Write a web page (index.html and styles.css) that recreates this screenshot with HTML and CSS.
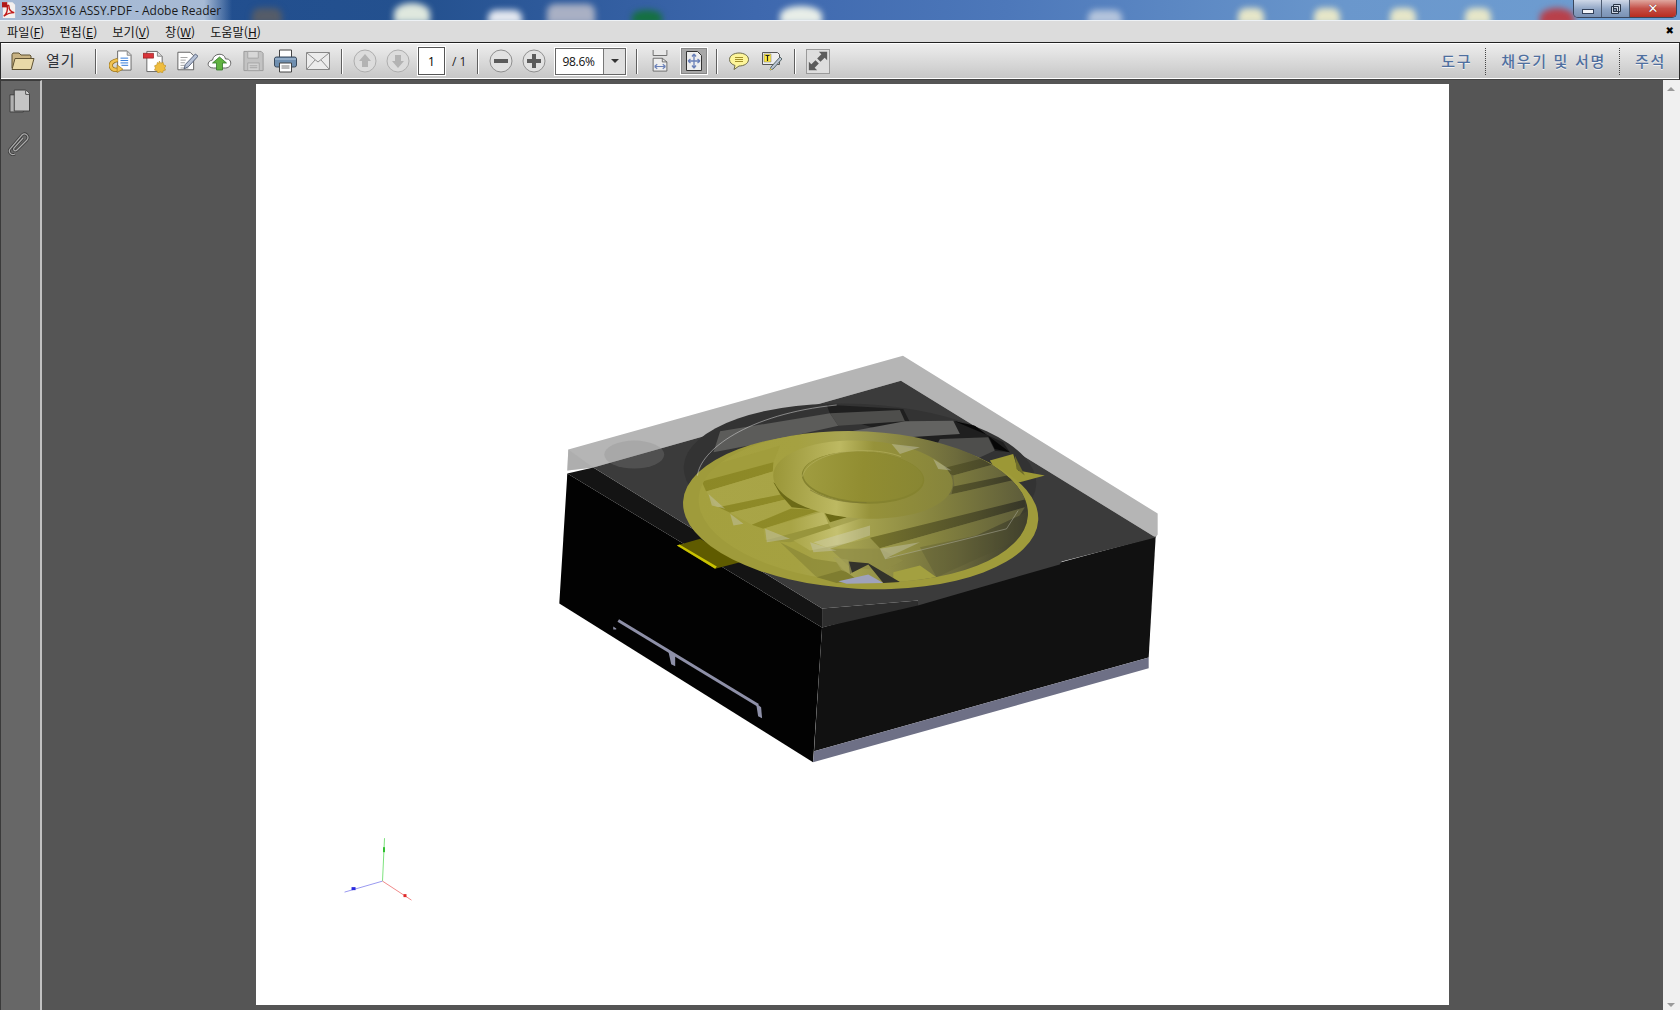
FILE: index.html
```html
<!DOCTYPE html>
<html lang="ko">
<head>
<meta charset="utf-8">
<title>35X35X16 ASSY.PDF - Adobe Reader</title>
<link rel="stylesheet" href="styles.css">
</head>
<body>
<div class="window">
  <header class="titlebar">
    <div class="desk">
      <i class="blob b1"></i><i class="blob b2"></i><i class="blob b3"></i><i class="blob b4"></i><i class="blob b5"></i><i class="blob b6"></i><i class="blob b7"></i><i class="blob b8"></i><i class="blob b9"></i><i class="blob b10"></i><i class="blob b11"></i><i class="blob b12"></i>
    </div>
    <div class="title-left">
      <svg class="app-icon" viewBox="0 0 16 18"><path d="M1 0h11l3 3v15H1z" fill="#f4f0ee"/><path d="M2 16c3-2 5-7 4-11 0-2 2-2 2 0 0 4 2 6 6 7-4 0-8 1-12 4z" fill="none" stroke="#c01818" stroke-width="1.6"/><path d="M0 0h6v6H0z" fill="#b01818"/></svg>
      <span class="title-text">35X35X16 ASSY.PDF - Adobe Reader</span>
    </div>
    <div class="winbtns">
      <div class="wb wb-min"><i></i></div>
      <div class="wb wb-max"><svg viewBox="0 0 12 12"><path d="M3.500 1.500h7v7h-7zM1.500 3.500h7v7h-7z" fill="#cfd8e6" stroke="#2a3648"/><path d="M3.500 5.500h3v3h-3z" fill="#7f93ad" stroke="#2a3648"/></svg></div>
      <div class="wb wb-close"><span>✕</span></div>
    </div>
  </header>
  <nav class="menubar">
    <span class="mi m1">파일(<u>F</u>)</span>
    <span class="mi m2">편집(<u>E</u>)</span>
    <span class="mi m3">보기(<u>V</u>)</span>
    <span class="mi m4">창(<u>W</u>)</span>
    <span class="mi m5">도움말(<u>H</u>)</span>
    <span class="menu-close">✖</span>
  </nav>
  <div class="toolbar">
    <svg class="folder" viewBox="0 0 24 20"><path d="M1 17V3.500L2 2h6l2 2h9l1 1v3" fill="#c9b383" stroke="#5f5232"/><path d="M1 18.500l3-11h19l-3 11z" fill="#e9d9a8" stroke="#5f5232"/></svg>
    <span class="open-label">열기</span>
    <i class="sep s-a"></i>
    <div class="group g-docs">
      <svg class="ic" viewBox="0 0 24 24"><path d="M9 1.500h10l4 4v16H9z" fill="#fff" stroke="#666"/><path d="M19 2v4h4" fill="#ddd" stroke="#888"/><path d="M12 9h8M12 11.500h8M12 14h8M13 16.500h7" stroke="#2f78d8"/><path d="M9 11c-5 1-8 3-7 7 1 2.500 4 3.500 7 3" fill="none" stroke="#9c7418" stroke-width="4.400"/><path d="M9 11c-5 1-8 3-7 7 1 2.500 4 3.500 7 3" fill="none" stroke="#f2c350" stroke-width="2.800"/><path d="M8.500 16l6 4.500-6 3.500z" fill="#f2c350" stroke="#9c7418" stroke-width=".7"/></svg>
      <svg class="ic" viewBox="0 0 24 24"><path d="M4 2h11l5 5v16H4z" fill="#fff" stroke="#666"/><path d="M15 2v5h5" fill="#ddd" stroke="#888"/><path d="M0 4h11v5H0z" fill="#d8343a" stroke="#8c1c1c" stroke-width=".7"/><path d="M17 12l1.500 2.300 2.500-.8.500 2.500 2.500 1-1.500 2.200 1 2.300-2.500.7-.5 2-2.500-.8-2.500 1-1-2.200-2.500-.7 1-2.300-1-2.200 2.500-1 .5-2.500 2 .8z" fill="#efbd3e" stroke="#b88a1c" stroke-width=".6"/></svg>
      <svg class="ic ic-n" viewBox="0 0 24 24"><path d="M1 2h14l4 4v16H1z" fill="#fff" stroke="#555"/><path d="M4 8h8M4 11h6M4 14h5M4 17h5M4 20h9" stroke="#999"/><path d="M21 4l3 2.500-11 12-5 2.500 1.500-5z" fill="#b7c2d6" stroke="#4c5872"/></svg>
      <svg class="ic ic-w" viewBox="0 0 24 24"><path d="M6 19c-7 0-7-7-1-8 1-7 12-8 13-1 7-1 7 9 0 9z" fill="#fff" stroke="#666"/><path d="M12 8l-7 6h4v7h6v-7h4z" fill="#62b342" stroke="#33782a" stroke-width=".8"/></svg>
      <svg class="ic ic-s" viewBox="0 0 24 24"><path d="M2 2h18l2 2v18H2z" fill="#c3c3c3" stroke="#9a9a9a"/><path d="M6 2h11v7H6z" fill="#d8d8d8" stroke="#a5a5a5"/><path d="M6 14h12v8H6z" fill="#d2d2d2" stroke="#a5a5a5"/><path d="M8 17h8M8 19h8" stroke="#a5a5a5"/></svg>
      <svg class="ic ic-p" viewBox="0 0 24 24"><path d="M6 1h12v8H6z" fill="#fff" stroke="#444"/><rect x="1" y="8" width="22" height="10" rx="2" fill="#6f8fb0" stroke="#3a4a5c"/><path d="M1.500 10h21" stroke="#b8cbe0"/><path d="M6 14h12v9H6z" fill="#fff" stroke="#444"/><path d="M8 17h8M8 19h8" stroke="#777"/></svg>
      <svg class="ic ic-m" viewBox="0 0 24 18"><path d="M.5.500h23v17H.5z" fill="#ececec" stroke="#888"/><path d="M1 1l11 9L23 1M1 17l8-9M23 17l-8-9" fill="none" stroke="#8f8f8f"/></svg>
    </div>
    <i class="sep s-b"></i>
    <svg class="circ c-up" viewBox="0 0 24 24"><circle cx="12" cy="12" r="11" fill="#dcdcdc" stroke="#aeaeae"/><path d="M12 5l6 7h-3v6H9v-6H6z" fill="#b3b3b3"/></svg>
    <svg class="circ c-down" viewBox="0 0 24 24"><circle cx="12" cy="12" r="11" fill="#dcdcdc" stroke="#aeaeae"/><path d="M12 19l6-7h-3V6H9v6H6z" fill="#b3b3b3"/></svg>
    <div class="pagebox">1</div>
    <span class="pagetotal">/ 1</span>
    <i class="sep s-c"></i>
    <svg class="circ c-minus" viewBox="0 0 24 24"><circle cx="12" cy="12" r="11" fill="#e2e2e2" stroke="#8f8f8f"/><path d="M5 10h14v4H5z" fill="#5c5c5c"/></svg>
    <svg class="circ c-plus" viewBox="0 0 24 24"><circle cx="12" cy="12" r="11" fill="#e2e2e2" stroke="#8f8f8f"/><path d="M10 5h4v5h5v4h-5v5h-4v-5H5v-4h5z" fill="#5c5c5c"/></svg>
    <div class="zoombox"><span class="zoomval">98.6%</span><span class="zoomarrow"><i></i></span></div>
    <i class="sep s-d"></i>
    <svg class="fit-w" viewBox="0 0 16 24"><path d="M.5 0v6h15V0" fill="#e8e8e8" stroke="#666"/><path d="M.5 9h10l5 4v10H.5z" fill="#eee" stroke="#666"/><path d="M10.500 9v4h5" fill="none" stroke="#666"/><path d="M2 18h12M2 18l3-2.500M2 18l3 2.500M14 18l-3-2.500M14 18l-3 2.500" fill="none" stroke="#6a80b8" stroke-width="1.300"/></svg>
    <div class="fit-p"><svg viewBox="0 0 16 20"><path d="M.5.500h11l4 4v15H.5z" fill="#eee" stroke="#333"/><path d="M8 3v14M2 10h12M8 3L6 5.500M8 3l2 2.500M8 17l-2-2.500M8 17l2-2.500M2 10l2.500-2M2 10l2.500 2M14 10l-2.500-2M14 10l-2.500 2" fill="none" stroke="#6a80b8" stroke-width="1.300"/></svg></div>
    <i class="sep s-e"></i>
    <svg class="cmt" viewBox="0 0 20 18"><path d="M10 1c5 0 9.500 2.500 9.500 6.500S15 14 10 14l-5 3.500 1-4C3 12.500.5 10.500.5 7.500.5 3.500 5 1 10 1z" fill="#fdf59a" stroke="#6d6b4a"/><path d="M6 5.500h8M6 7.500h8M6 9.500h8" stroke="#a28f2a"/></svg>
    <svg class="hl" viewBox="0 0 20 20"><path d="M.5 1.500h15l2 2v10H.5z" fill="#eee" stroke="#555"/><path d="M2 3h7v8H2z" fill="#ffe93c" stroke="#777" stroke-width=".5"/><path d="M3.500 4.500h4M5.500 4.500V10" stroke="#222" stroke-width="1.200"/><path d="M18 6l2 2-9 10-3 1 1-3z" fill="#b9c3d3" stroke="#566"/><path d="M8 19l2 0-2-2z" fill="#e7c93c"/></svg>
    <i class="sep s-f"></i>
    <div class="fs"><svg viewBox="0 0 24 24"><path d="M13 1h10v10l-3-3-5 5-4-4 5-5zM11 23H1V13l3 3 5-5 4 4-5 5z" fill="#5c5c5c"/></svg></div>
    <div class="tabs">
      <span class="tab t-tool">도구</span>
      <i class="dots"></i>
      <span class="tab t-sign">채우기 및 서명</span>
      <i class="dots"></i>
      <span class="tab t-note">주석</span>
    </div>
  </div>
  <main class="body">
    <aside class="rail">
      <svg class="rail-pages" viewBox="0 0 22 24"><path d="M1 5.500h14v18H1z" fill="#b0b0b0" stroke="#3e3e3e"/><path d="M5.500.500h12l4 4v18h-16z" fill="#c4c4c4" stroke="#3e3e3e"/><path d="M17.500 1v4h4" fill="#eee" stroke="#3e3e3e"/></svg>
      <svg class="rail-clip" viewBox="0 0 22 24"><path d="M7 22c-4 2-7-2-5-5L14 3c3-3 8 1 5 5L9 18c-2 2-4 0-3-2l9-10" fill="none" stroke="#3c3c3c" stroke-width="2.800"/><path d="M7 22c-4 2-7-2-5-5L14 3c3-3 8 1 5 5L9 18c-2 2-4 0-3-2l9-10" fill="none" stroke="#ababab" stroke-width="1.200"/></svg>
    </aside>
    <section class="canvas">
      <div class="page">
        <svg class="drawing" viewBox="256 83 1193 922">
          <defs>
            <linearGradient id="dish" x1="85" x2="1075" y1="0" y2="0" gradientUnits="userSpaceOnUse">
              <stop offset="0" stop-color="#a4a03e"/><stop offset=".3" stop-color="#a5a141"/><stop offset=".44" stop-color="#a8a552"/><stop offset=".58" stop-color="#8f8c45"/><stop offset=".78" stop-color="#6d6b3c"/><stop offset="1" stop-color="#3a3a2c"/>
            </linearGradient>
            <linearGradient id="bandz" x1="85" x2="1075" y1="0" y2="0" gradientUnits="userSpaceOnUse">
              <stop offset="0" stop-color="#a9a547"/><stop offset=".28" stop-color="#a8a446"/><stop offset=".42" stop-color="#c5c170"/><stop offset=".5" stop-color="#a5a24e"/><stop offset=".72" stop-color="#85833f"/><stop offset="1" stop-color="#5c5b3a"/>
            </linearGradient>
            <linearGradient id="stepz" x1="85" x2="1075" y1="0" y2="0" gradientUnits="userSpaceOnUse">
              <stop offset="0" stop-color="#8c8826"/><stop offset=".35" stop-color="#8f8b28"/><stop offset=".6" stop-color="#6c6a2c"/><stop offset=".85" stop-color="#4d4c2a"/><stop offset="1" stop-color="#343428"/>
            </linearGradient>
            <linearGradient id="discz" x1="309" x2="849" y1="0" y2="0" gradientUnits="userSpaceOnUse">
              <stop offset="0" stop-color="#9a9638"/><stop offset=".36" stop-color="#bdb962"/><stop offset=".55" stop-color="#96923a"/><stop offset="1" stop-color="#86843c"/>
            </linearGradient>
            <linearGradient id="topz" x1="395" x2="765" y1="0" y2="0" gradientUnits="userSpaceOnUse">
              <stop offset="0" stop-color="#a09d40"/><stop offset=".5" stop-color="#918d31"/><stop offset="1" stop-color="#888633"/>
            </linearGradient>
            <clipPath id="dishclip"><ellipse cx="580" cy="318" rx="495" ry="226" transform="rotate(3 580 318)"/></clipPath>
          </defs>
          <!-- plate -->
          <polygon points="568,449 903,355 1158,513 1158,534 1156,537 901,380 593,467 567,470" fill="#b5b5b5"/>
          <polygon points="568,449 593,467 567,470" fill="#aaaaaa" opacity=".6"/>
          <!-- sides -->
          <polygon points="567,473 559,603 813,762 822,627" fill="#020202"/>
          <polygon points="822,627 814,751 1149,657 1156,536" fill="#111111"/>
          <polygon points="814,751 1149,657 1149,668 813,762" fill="#6e7086"/>
          <polyline points="618,620 758,705" fill="none" stroke="#8e90a8" stroke-width="3"/>
          <polygon points="668,650 675,654 675,666 671,664" fill="#8e90a8"/>
          <polygon points="756,703 761,707 762,718 758,716" fill="#8e90a8"/>
          <polygon points="613,626 616,628 616,629 613,629" fill="#8e90a8"/>
          <!-- top -->
          <polygon points="567,473 593,467 822,608 822,627" fill="#141414"/>
          <polygon points="593,467 901,380 1156,537 1062,561 1060,564 918,605 918,600 822,608" fill="#3b3b3b"/>
          <polygon points="822,608 918,600 918,605 822,627" fill="#2e2e2e"/>
          <ellipse cx="634" cy="454" rx="30" ry="14" fill="#8a8a8a" opacity=".28"/>
          <!-- model close-up in zoomed coordinates -->
          <g transform="translate(670 400) scale(.33333)">
            <ellipse cx="570" cy="225" rx="530" ry="215" fill="#333333" transform="rotate(3 570 225)"/>
            <polygon points="470,12 700,25 720,65 860,62 1000,125 1020,155 965,150 700,110 480,40" fill="#1f1f1f"/>
            <polygon points="130,155 150,92 480,38 505,75 260,130" fill="#5c5c5a"/>
            <polygon points="505,75 480,38 690,28 705,62" fill="#4e4e4c"/>
            <polygon points="705,62 850,60 870,100 680,112 500,100" fill="#636361"/>
            <polygon points="810,115 955,110 975,150 920,175 800,135" fill="#4e4e4c"/>
            <polygon points="855,62 915,75 1020,155 975,145 955,105" fill="#070707"/>

            <!-- tabs under the rim -->
            <polygon points="20,435 90,415 210,485 135,505" fill="#5f5b00"/>
            <polygon points="20,435 28,432 140,498 135,505" fill="#c9c200"/>
            <polygon points="960,180 1030,160 1045,210 1125,225 1050,245 1000,240" fill="#9c9836"/>

            <!-- rim -->
            <ellipse cx="572" cy="331" rx="534" ry="234" fill="#9f9b3b" transform="rotate(3 572 331)"/>

            <!-- dish and steps -->
            <g clip-path="url(#dishclip)">
              <rect x="60" y="60" width="1040" height="520" fill="url(#dish)"/>
              <polygon points="90,205 330,135 310,185 95,243" fill="#a19d3c"/>
              <polygon points="95,243 310,185 308,213 108,273" fill="url(#stepz)"/>
              <polygon points="108,273 308,213 340,280 140,320" fill="url(#bandz)"/>
              <polygon points="145,320 340,280 346,297 180,337" fill="url(#stepz)"/>
              <polygon points="180,337 346,297 362,323 245,373" fill="url(#bandz)"/>
              <polygon points="245,373 362,325 458,328 280,385" fill="url(#stepz)"/>
              <polygon points="280,385 460,333 475,370 285,420" fill="url(#bandz)"/>
              <polygon points="285,420 475,370 490,395 360,425" fill="#98953c"/>
              <polygon points="810,205 930,175 975,190 850,225" fill="url(#stepz)"/>
              <polygon points="850,225 975,190 1040,170 1065,225 855,270" fill="url(#bandz)"/>
              <polygon points="850,258 1058,215 1068,235 845,280" fill="url(#stepz)"/>
              <polygon points="370,420 570,355 830,285 1068,230 1065,300 570,420 420,450" fill="url(#bandz)"/>
              <polygon points="600,412 1065,297 1065,320 630,443" fill="url(#stepz)"/>
              <polygon points="630,443 1065,320 1050,345 920,405 645,475" fill="url(#bandz)"/>
              <polygon points="330,425 430,475 500,485 530,520 440,530" fill="#8a8836" opacity=".7"/>
              <polygon points="480,445 630,445 700,480 640,510 540,500" fill="#8f8c46" opacity=".7"/>
              <polygon points="800,530 1075,405 1075,330 1050,345 920,405 750,440" fill="#4f4e2e" opacity=".3"/>
              <polygon points="670,515 750,495 800,530 670,550" fill="#a3a040"/>
            </g>
            <polygon points="1035,165 1065,225 1040,205" fill="#6e6c2a"/>

            <!-- centre vent -->
            <polygon points="440,530 520,508 565,540 500,548" fill="#7f7d30"/>
            <polygon points="505,542 595,522 640,548 530,550" fill="#9fa2bc"/>
            <polygon points="535,483 595,488 690,545 640,548 595,492 540,520" fill="#33332b"/>
            <polygon points="490,470 535,478 548,522 515,510" fill="#a3a058" opacity=".65"/>

            <!-- raised disc -->
            <polygon points="310,245 330,280 365,320 460,330 480,365 530,350 420,320" fill="#6c6a16"/>
            <ellipse cx="579" cy="237" rx="270" ry="117" fill="url(#discz)" transform="rotate(3 579 237)"/>
            <ellipse cx="579" cy="231" rx="184" ry="78" fill="#85832f" transform="rotate(3 579 231)"/>
            <ellipse cx="579" cy="228" rx="180" ry="75" fill="url(#topz)" transform="rotate(3 579 228)"/>
            <path d="M397 228c12-48 90-78 182-78 42 0 84 6 114 18" fill="none" stroke="#b3af5d" stroke-width="2"/>
            <path d="M420 268c50 30 110 40 170 38" fill="none" stroke="#787632" stroke-width="2"/>

            <!-- glass facets -->
            <g fill="#c6c6b2" opacity=".45">
              <polygon points="115,280 165,325 125,315"/>
              <polygon points="180,340 220,370 190,375"/>
              <polygon points="285,385 360,415 290,425"/>
              <polygon points="420,425 500,450 430,455"/>
              <polygon points="630,445 750,425 645,475"/>
              <polygon points="665,130 750,140 690,160"/>
              <polygon points="790,175 845,210 805,205"/>
            </g>
            <polygon points="430,425 600,375 600,405 480,445" fill="#d8d8c8" opacity=".35"/>
            <path d="M82 225C90 150 230 40 500 13" fill="none" stroke="#dedede" stroke-opacity=".5" stroke-width="3"/>
            <path d="M645 475l225-55 140-35 35-55" fill="none" stroke="#bcbcae" stroke-opacity=".45" stroke-width="3"/>
          </g>
          <!-- axes -->
          <line x1="382" y1="881" x2="384" y2="838" stroke="#7ce27c"/>
          <rect x="382.500" y="847" width="2" height="5" fill="#30c030"/>
          <line x1="382" y1="881" x2="344" y2="892" stroke="#9a9af0"/>
          <rect x="351" y="887" width="4" height="3" fill="#2a2ae0"/>
          <line x1="382" y1="881" x2="411" y2="900" stroke="#f08a8a"/>
          <rect x="403" y="894" width="3" height="3" fill="#e02a2a"/>
        </svg>
      </div>
    </section>
    <aside class="scroll"><i class="sc-up"></i><i class="sc-down"></i></aside>
  </main>
</div>
</body>
</html>
```
FILE: styles.css
```css
* { box-sizing: border-box; }
html, body { margin: 0; padding: 0; }
body { width: 1680px; height: 1010px; overflow: hidden; font-family: "Noto Sans", "Noto Sans CJK KR", sans-serif; }
.window { width: 1680px; height: 1010px; display: flex; flex-direction: column; background: #555; }

.titlebar { height: 21px; flex: none; position: relative; overflow: hidden; background: linear-gradient(90deg, #1f4c8e 0, #24518f 25%, #3e68ae 45%, #4d78ba 60%, #6a97cc 80%, #6f9ed2 100%); border-bottom: 1px solid #eef2f6; display: flex; justify-content: space-between; }
.desk { position: absolute; inset: 0; }
.blob { position: absolute; display: block; filter: blur(3px); border-radius: 8px 8px 0 0; }
.b1 { left: 252px; top: 8px; width: 30px; height: 16px; background: #555c68; }
.b2 { left: 394px; top: 3px; width: 36px; height: 20px; background: #dfe8de; border-radius: 50% 50% 0 0; }
.b3 { left: 488px; top: 10px; width: 34px; height: 14px; background: #e4e8f0; }
.b4 { left: 547px; top: 4px; width: 48px; height: 20px; background: #a9b0c4; }
.b5 { left: 632px; top: 10px; width: 30px; height: 14px; background: #157040; border-radius: 50% 50% 0 0; }
.b6 { left: 780px; top: 6px; width: 42px; height: 18px; background: #e8eee8; border-radius: 50% 50% 0 0; }
.b7 { left: 1088px; top: 10px; width: 34px; height: 14px; background: #b4c4dc; }
.b8 { left: 1238px; top: 8px; width: 26px; height: 16px; background: #e6e6c8; }
.b9 { left: 1314px; top: 8px; width: 26px; height: 16px; background: #e6e6c8; }
.b10 { left: 1390px; top: 8px; width: 26px; height: 16px; background: #e6e6c8; }
.b11 { left: 1465px; top: 8px; width: 26px; height: 16px; background: #e6e6c8; }
.b12 { left: 1540px; top: 8px; width: 34px; height: 18px; background: #b8404a; border-radius: 50% 50% 0 0; }
.title-left { position: relative; display: flex; align-items: center; height: 20px; width: 232px; padding-left: 4px; background: linear-gradient(90deg, rgba(190,205,225,.85) 0, rgba(190,205,225,.85) 88%, rgba(190,205,225,0) 100%); }
.app-icon { width: 14px; height: 16px; flex: none; margin-left: -2px; }
.title-text { margin-left: 5px; font-family: "Open Sans", sans-serif; font-size: 12px; color: #1a1a1a; white-space: nowrap; }
.winbtns { position: relative; display: flex; height: 18px; margin-right: 3px; border: 1px solid #39465c; border-top: 0; border-radius: 0 0 5px 5px; overflow: hidden; }
.wb { display: flex; align-items: center; justify-content: center; height: 100%; }
.wb-min { width: 28px; background: linear-gradient(#cfd8e8, #8ea4c4 55%, #7a92b4); border-right: 1px solid #4c5a70; }
.wb-min i { display: block; width: 12px; height: 5px; margin-top: 5px; background: #f2f4f8; border: 1px solid #33415a; }
.wb-max { width: 28px; background: linear-gradient(#cfd8e8, #8ea4c4 55%, #7a92b4); border-right: 1px solid #4c5a70; }
.wb-max svg { width: 12px; height: 12px; }
.wb-close { width: 46px; background: linear-gradient(#e0a8a0, #c45048 50%, #b82c20); }
.wb-close span { color: #fff; font-size: 13px; font-weight: 700; line-height: 1; font-family: "DejaVu Sans", sans-serif; text-shadow: 0 0 1px #400; }

.menubar { height: 21px; flex: none; background: #dcdcdc; display: flex; align-items: center; font-size: 12.200px; color: #111; position: relative; font-family: "Noto Sans CJK KR", sans-serif; }
.mi { white-space: nowrap; line-height: 20px; }
.m1 { margin-left: 7px; }
.m2, .m3, .m4, .m5 { margin-left: 15px; }
.menu-close { position: absolute; right: 6px; top: 3px; font-size: 10px; line-height: 14px; color: #000; font-family: "DejaVu Sans", sans-serif; }

.toolbar { height: 38px; flex: none; display: flex; align-items: center; border: 1px solid #2c2c2c; border-bottom-color: #444; border-top-color: #222; box-shadow: inset 0 1px 0 #fff, inset 0 -1px 0 #fff; background: linear-gradient(#eeeeee, #c6c6c6); }
.folder { width: 24px; height: 20px; margin-left: 10px; flex: none; }
.open-label { margin-left: 11px; width: 31px; font-size: 15px; line-height: 20px; padding-bottom: 2px; color: #2f3238; font-family: "Noto Sans CJK KR", sans-serif; white-space: nowrap; letter-spacing: 1px; }
.sep { display: block; flex: none; width: 1px; height: 25px; background: #5f5f5f; box-shadow: 1px 0 0 #fff; }
.s-a { margin-left: 18px; }
.group { display: flex; align-items: center; flex: none; margin-left: 13px; }
.ic { width: 23px; height: 24px; margin-right: 11px; flex: none; }
.ic-n { width: 21px; margin-right: 9px; }
.ic-w { width: 25px; margin-right: 10px; }
.ic-s { margin-right: 8px; }
.ic-p { width: 25px; margin-right: 8px; }
.ic-m { width: 24px; height: 18px; margin-right: 0; }
.s-b { margin-left: 11px; }
.circ { width: 24px; height: 24px; flex: none; }
.c-up { margin-left: 11px; }
.c-down { margin-left: 9px; }
.pagebox { width: 27px; height: 28px; margin-left: 8px; flex: none; background: #fff; border: 1px solid #555; outline: 1px solid #fff; font-size: 12px; display: flex; align-items: center; justify-content: center; color: #000; font-family: "Open Sans", sans-serif; }
.pagetotal { margin-left: 7px; width: 17px; font-size: 12px; white-space: nowrap; color: #222; font-family: "Open Sans", sans-serif; }
.s-c { margin-left: 8px; }
.c-minus { margin-left: 11px; }
.c-plus { margin-left: 9px; }
.zoombox { margin-left: 9px; width: 71px; height: 27px; flex: none; display: flex; background: #fff; border: 1px solid #666; outline: 1px solid #fff; }
.zoomval { width: 48px; padding-right: 2px; font-size: 12px; line-height: 25px; text-align: center; letter-spacing: -.3px; color: #111; font-family: "Open Sans", sans-serif; border-right: 1px solid #777; }
.zoomarrow { flex: 1; background: #e0e0e0; display: flex; align-items: center; justify-content: center; }
.zoomarrow i { display: block; width: 0; height: 0; border: 4px solid transparent; border-top: 4px solid #333; margin-top: 4px; }
.s-d { margin-left: 10px; }
.fit-w { width: 16px; height: 22px; margin-left: 15px; flex: none; }
.fit-p { margin-left: 12px; width: 28px; height: 28px; flex: none; background: #a8a8a8; border: 1px solid #fff; display: flex; align-items: center; justify-content: center; box-shadow: inset 0 0 0 1px #888; }
.fit-p svg { width: 16px; height: 20px; }
.s-e { margin-left: 8px; }
.cmt { width: 20px; height: 18px; margin-left: 12px; flex: none; }
.hl { width: 20px; height: 20px; margin-left: 13px; flex: none; }
.s-f { margin-left: 12px; }
.fs { margin-left: 11px; width: 24px; height: 25px; flex: none; background: #dedede; border: 1px solid #9a9a9a; display: flex; align-items: center; justify-content: center; }
.fs svg { width: 20px; height: 20px; }
.tabs { margin-left: auto; display: flex; align-items: center; height: 100%; padding: 0 13px 2px 0; color: #4f6f9f; font-size: 15px; font-weight: 500; font-family: "Noto Sans CJK KR", sans-serif; letter-spacing: 1.700px; text-shadow: 0 1px 0 #f2f2f2; }
.tab { white-space: nowrap; }
.dots { display: block; width: 1px; height: 27px; margin: 2px 15px 0 13px; border-left: 1px dotted #444; }

.body { flex: 1; min-height: 0; display: flex; }
.rail { width: 42px; flex: none; background: #676767; border-top: 1px solid #3c3c3c; border-left: 1px solid #3a3a3a; border-right: 2px solid #c2c2c2; display: flex; flex-direction: column; align-items: center; padding-top: 8px; }
.rail-pages { width: 21px; height: 24px; margin-left: -3px; }
.rail-clip { width: 22px; height: 24px; margin-top: 19px; margin-left: -3px; }
.canvas { flex: 1; min-width: 0; background: #555; padding: 4px 214px 5px 214px; }
.page { width: 1193px; height: 100%; background: #fff; }
.drawing { display: block; width: 100%; height: 100%; }
.scroll { width: 17px; flex: none; background: #f0f0f0; position: relative; }
.sc-up, .sc-down { position: absolute; left: 4px; width: 0; height: 0; border: 4px solid transparent; }
.sc-up { top: 3px; border-bottom-color: #9a9a9a; }
.sc-down { bottom: -1px; border-top-color: #9a9a9a; }
```
